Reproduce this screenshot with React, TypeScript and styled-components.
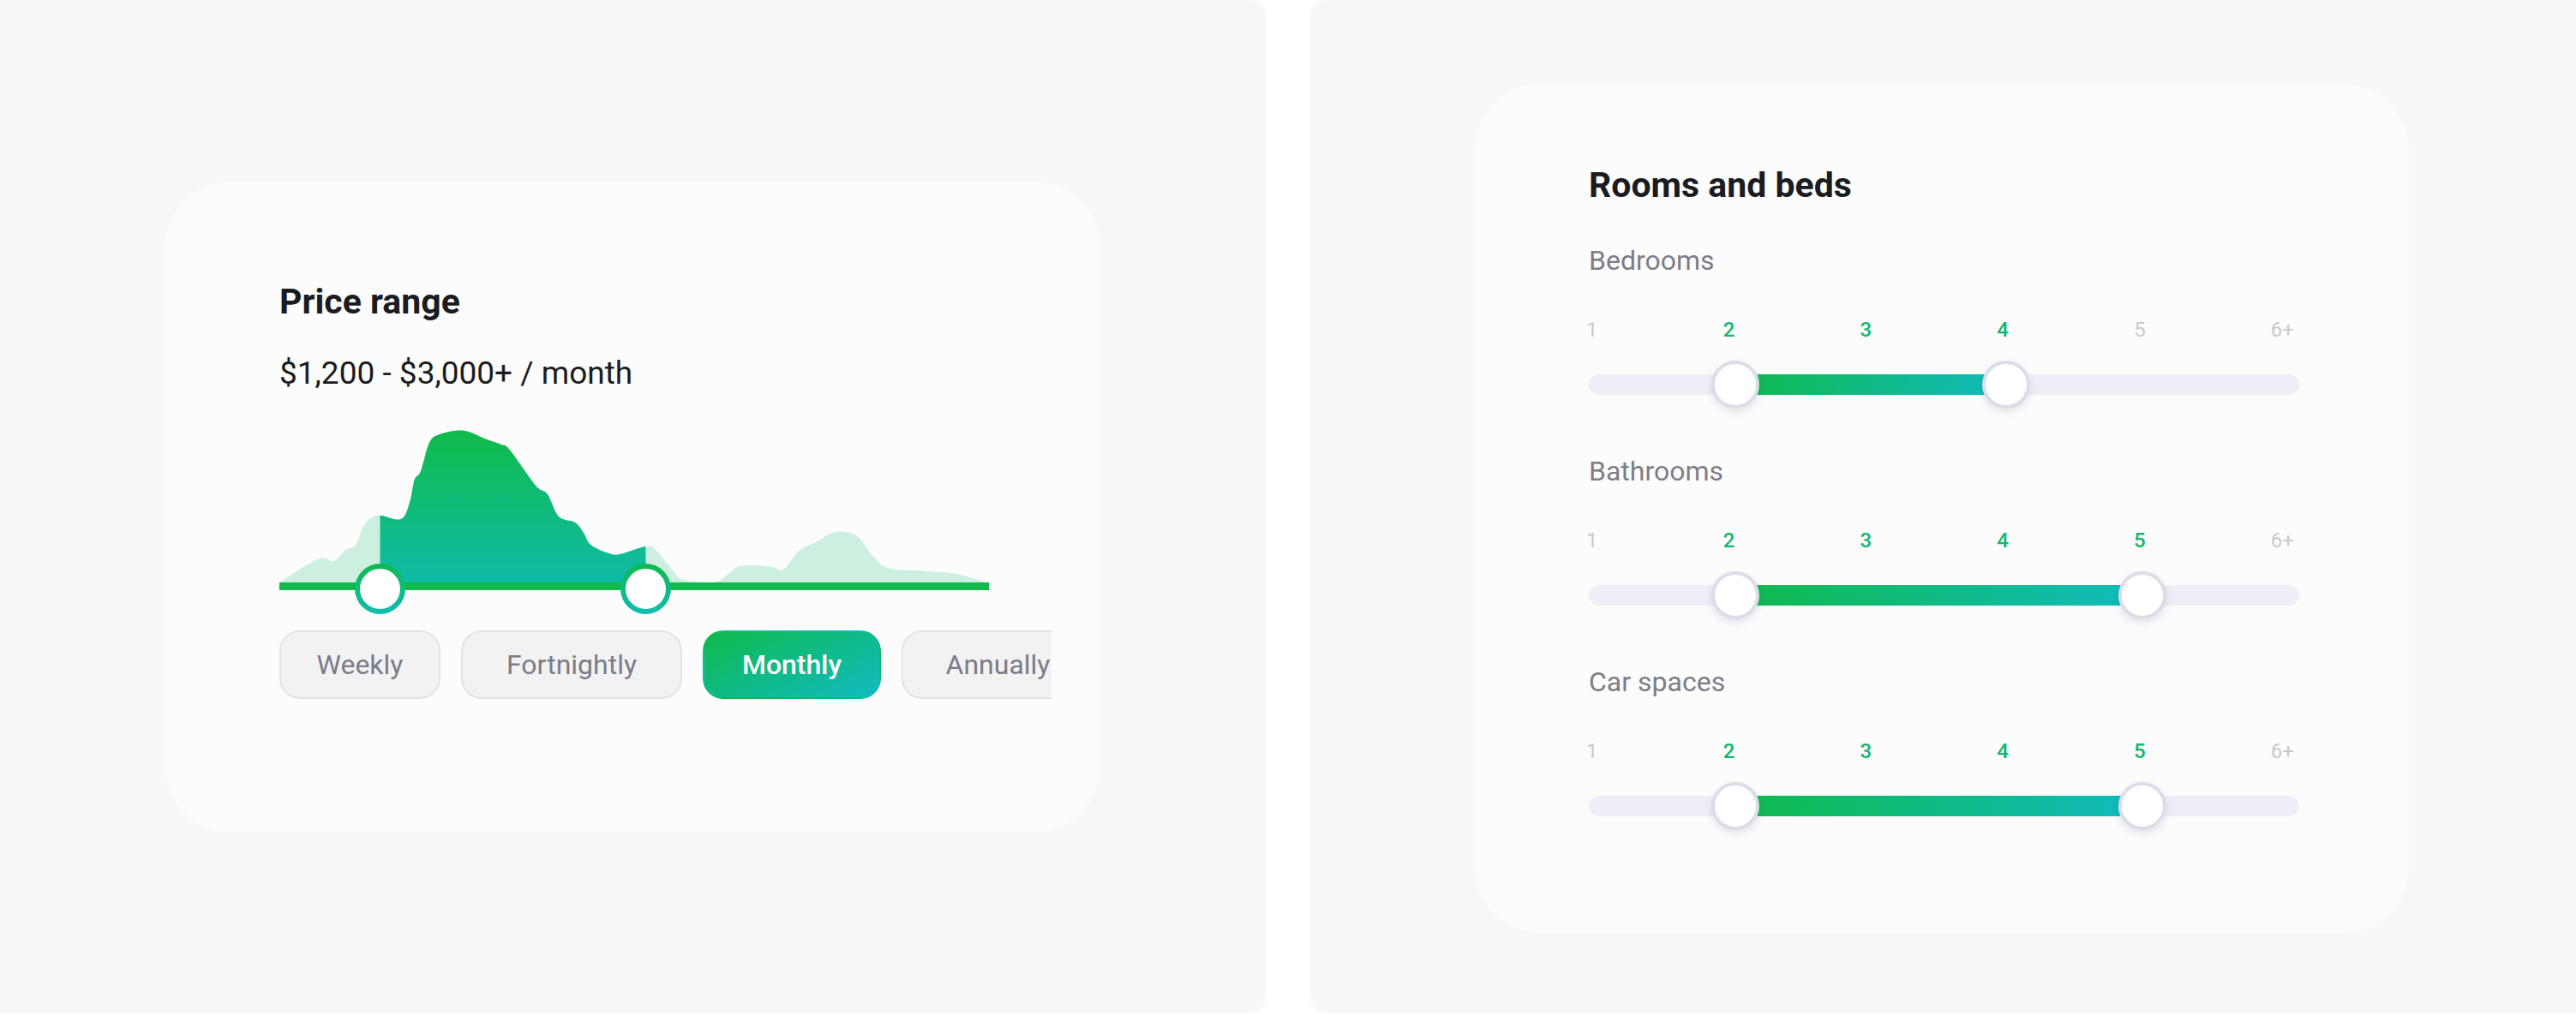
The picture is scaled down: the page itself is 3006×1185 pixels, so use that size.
import React from 'react'
import styled, { createGlobalStyle } from 'styled-components'

const GlobalStyle = createGlobalStyle`
  html, body {
    margin: 0;
    padding: 0;
    background: #ffffff;
  }
  body {
    font-family: Roboto, 'Noto Sans', 'Liberation Sans', sans-serif;
  }
  * {
    box-sizing: border-box;
  }
`

const Page = styled.div`
  display: flex;
  gap: 50px;
  width: 3006px;
  height: 1185px;
`

const Panel = styled.section<{ $top: number; $side: 'left' | 'right' }>`
  width: 1478px;
  height: 1183px;
  flex-shrink: 0;
  background: #f8f8f8;
  padding: ${(p) => p.$top}px 0 0 193px;
  border-radius: ${(p) => (p.$side === 'left' ? '0 20px 20px 0' : '20px 0 0 20px')};
`

const Card = styled.div<{ $pt: number; $pb: number }>`
  width: 1090px;
  background: #fcfcfc;
  border-radius: 76px;
  padding: ${(p) => p.$pt}px 0 ${(p) => p.$pb}px 133px;
  display: flex;
  flex-direction: column;
`

const Title = styled.h2`
  margin: 0;
  font-size: 41px;
  line-height: 48px;
  font-weight: 700;
  color: #1a1c21;
`

const Price = styled.div`
  margin-top: 38px;
  font-size: 37px;
  line-height: 44px;
  color: #1a1c21;
`

const Chart = styled.div`
  position: relative;
  margin-top: 32px;
  width: 828px;
  height: 230px;
`

const ChartSvg = styled.svg`
  display: block;
`

const PriceThumb = styled.div<{ $x: number }>`
  position: absolute;
  top: 168px;
  left: ${(p) => p.$x - 29.5}px;
  width: 59px;
  height: 59px;
  border-radius: 50%;
  border: 6px solid transparent;
  background:
    linear-gradient(#ffffff, #ffffff) padding-box,
    linear-gradient(180deg, #10b94b, #11bdb2) border-box;
`

const Periods = styled.div`
  margin-top: 16px;
  width: 901px;
  display: flex;
  gap: 24px;
  overflow: hidden;
`

const Period = styled.button<{ $w: number; $active?: boolean }>`
  flex-shrink: 0;
  width: ${(p) => p.$w}px;
  height: 80px;
  border-radius: 24px;
  font-family: Roboto, 'Noto Sans', sans-serif;
  font-size: 32px;
  padding: 0;
  border: 2px solid ${(p) => (p.$active ? 'transparent' : '#e3e3e6')};
  background: ${(p) =>
    p.$active ? 'linear-gradient(155deg, #10b94b 0%, #10bcc2 100%)' : '#f2f2f3'};
  color: ${(p) => (p.$active ? '#ffffff' : '#7b7c87')};
  font-weight: ${(p) => (p.$active ? 500 : 400)};
`

const Section = styled.div`
  display: flex;
  flex-direction: column;
  margin-top: 44px;
  & + & {
    margin-top: 69px;
  }
`

const Label = styled.div`
  font-size: 32px;
  line-height: 40px;
  color: #7c7d88;
`

const Ticks = styled.div`
  margin: 47px 0 0 -3px;
  width: 826px;
  display: flex;
  justify-content: space-between;
`

const Tick = styled.span<{ $on: boolean }>`
  font-size: 24px;
  line-height: 28px;
  font-weight: ${(p) => (p.$on ? 500 : 400)};
  color: ${(p) => (p.$on ? '#12b76e' : '#c9c9ce')};
`

const Track = styled.div`
  position: relative;
  margin-top: 38px;
  width: 829px;
  height: 24px;
  border-radius: 12px;
  background: #eeeff6;
`

const Fill = styled.div`
  position: absolute;
  top: 0;
  bottom: 0;
  background: linear-gradient(100deg, #10b94b 0%, #10bcbf 100%);
`

const Knob = styled.div`
  position: absolute;
  top: 50%;
  width: 56px;
  height: 56px;
  border-radius: 50%;
  background: #ffffff;
  border: 4px solid #dcdde9;
  box-shadow: 0 4px 10px rgba(40, 40, 90, 0.12);
  transform: translate(-50%, -50%);
`

type Pt = [number, number]

// light silhouette of the price histogram, in chart pixels
const curve: Pt[] = [
  [0, 190], [45, 162.7], [64, 165], [77, 151.7], [88.8, 146.7], [98, 125], [106, 115],
  [117.5, 111.7], [142, 116], [152, 96.7], [157.7, 70], [165, 60], [175, 26.7], [188, 16.7],
  [215, 12.7], [242, 23], [259, 29], [268.7, 35], [299, 76.7], [312.7, 86.7], [326, 113],
  [345, 120], [354.8, 131.7], [364, 146.7], [387, 156.7], [398.8, 156.7], [427.5, 148],
  [439, 151.7], [460, 176.7], [471.5, 186.7], [509.8, 189], [532.7, 173], [548, 170],
  [574, 171.7], [588, 175], [607, 152.5], [626, 143], [650, 131], [674, 136], [693, 160],
  [712, 173.6], [755, 176.7], [789, 180], [827, 190],
]

function smoothPath(pts: Pt[]) {
  let d = `M${pts[0][0]},${pts[0][1]}`
  for (let i = 0; i < pts.length - 1; i++) {
    const p0 = pts[i - 1] || pts[i]
    const p1 = pts[i]
    const p2 = pts[i + 1]
    const p3 = pts[i + 2] || p2
    const c1x = p1[0] + (p2[0] - p0[0]) / 6
    const c1y = p1[1] + (p2[1] - p0[1]) / 6
    const c2x = p2[0] - (p3[0] - p1[0]) / 6
    const c2y = p2[1] - (p3[1] - p1[1]) / 6
    d += ` C${c1x.toFixed(1)},${c1y.toFixed(1)} ${c2x.toFixed(1)},${c2y.toFixed(1)} ${p2[0]},${p2[1]}`
  }
  return d + ' L828,194 L0,194 Z'
}

const LOW = 117.5
const HIGH = 427.5

function PriceChart() {
  const area = smoothPath(curve)
  return (
    <Chart>
      <ChartSvg width={828} height={230} viewBox="0 0 828 230">
        <defs>
          <linearGradient id="peak" x1="0" y1="0" x2="0" y2="1">
            <stop offset="0" stopColor="#10bb4a" />
            <stop offset="1" stopColor="#10bbaa" />
          </linearGradient>
          <clipPath id="sel">
            <rect x={LOW} y={0} width={HIGH - LOW} height={230} />
          </clipPath>
        </defs>
        <path d={area} fill="#cdefe0" />
        <path d={area} fill="url(#peak)" clipPath="url(#sel)" />
        <rect x={0} y={190} width={828} height={9} fill="#10ba4b" />
      </ChartSvg>
      <PriceThumb $x={LOW} />
      <PriceThumb $x={HIGH} />
    </Chart>
  )
}

const periods = [
  { name: 'Weekly', w: 188 },
  { name: 'Fortnightly', w: 258 },
  { name: 'Monthly', w: 208, active: true },
  { name: 'Annually', w: 225 },
]

const ticks = ['1', '2', '3', '4', '5', '6+']

const rooms = [
  { label: 'Bedrooms', from: 2, to: 4 },
  { label: 'Bathrooms', from: 2, to: 5 },
  { label: 'Car spaces', from: 2, to: 5 },
]

const pct = (v: number) => 20.6 + (v - 2) * 19.1

function RangeRow({ label, from, to }: { label: string; from: number; to: number }) {
  return (
    <Section>
      <Label>{label}</Label>
      <Ticks>
        {ticks.map((t, i) => (
          <Tick key={t} $on={i + 1 >= from && i + 1 <= to}>
            {t}
          </Tick>
        ))}
      </Ticks>
      <Track>
        <Fill style={{ left: `${pct(from)}%`, width: `${pct(to) - pct(from)}%` }} />
        <Knob style={{ left: `${pct(from)}%` }} />
        <Knob style={{ left: `${pct(to)}%` }} />
      </Track>
    </Section>
  )
}

export default function App() {
  return (
    <>
      <GlobalStyle />
      <Page>
        <Panel $top={212} $side="left">
          <Card $pt={116} $pb={156}>
            <Title>Price range</Title>
            <Price>$1,200 - $3,000+ / month</Price>
            <PriceChart />
            <Periods>
              {periods.map((p) => (
                <Period key={p.name} $w={p.w} $active={p.active}>
                  {p.name}
                </Period>
              ))}
            </Periods>
          </Card>
        </Panel>
        <Panel $top={98} $side="right">
          <Card $pt={94} $pb={136}>
            <Title>Rooms and beds</Title>
            {rooms.map((r) => (
              <RangeRow key={r.label} {...r} />
            ))}
          </Card>
        </Panel>
      </Page>
    </>
  )
}
